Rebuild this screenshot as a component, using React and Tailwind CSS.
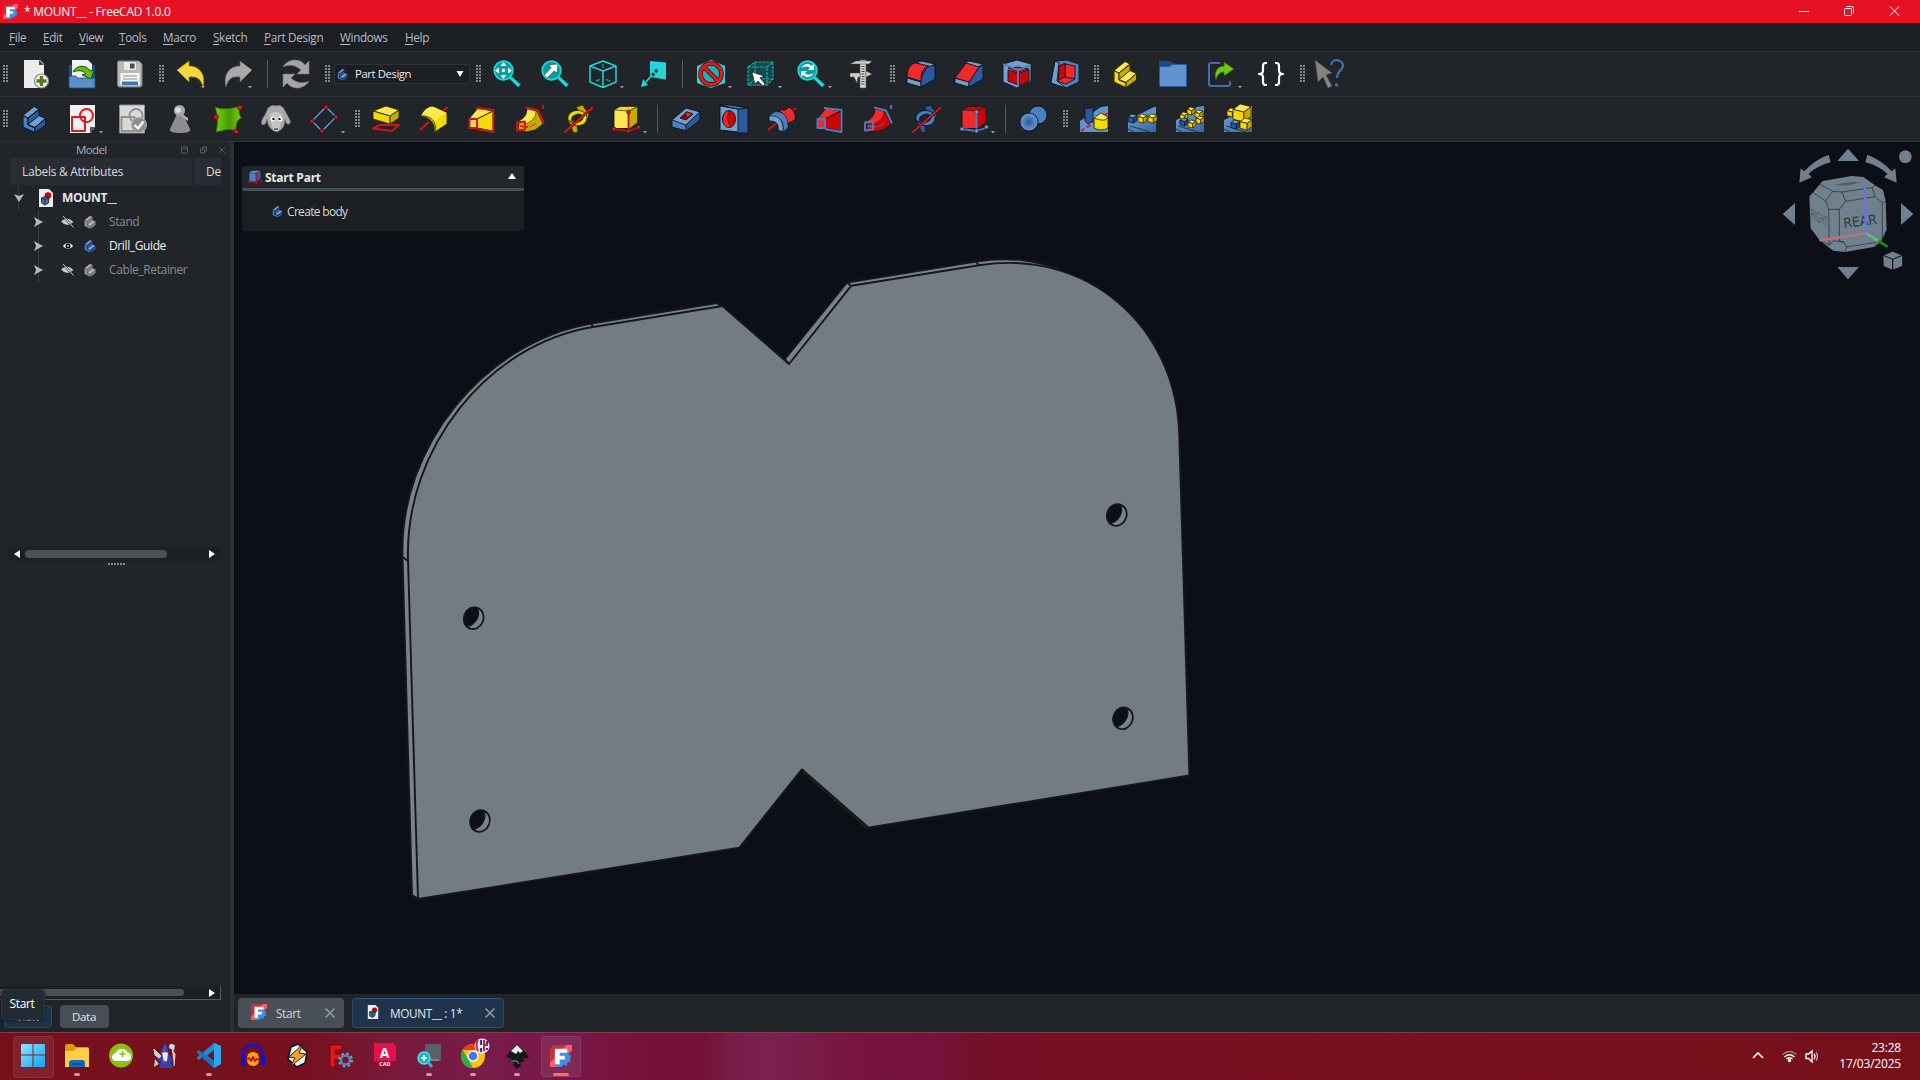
import React from "react";

const OUT = "#0b1521";
const B1 = "#729fcf", B2 = "#4a7fc0", B3 = "#2c5a9c";
const Y1 = "#fce94f", Y2 = "#f2d90c", Y3 = "#c9a900";
const R1 = "#f02a2a", R2 = "#cc0404";
const T1 = "#22d6da", T2 = "#0a9da0";
const OY = "#302b00";

function Svg({ children, className = "", drop, s = 28 }) {
  return (
    <svg viewBox="0 0 28 28" width={s} height={s} className={"shrink-0 overflow-visible " + className} strokeLinejoin="round">
      {children}
      {drop && <path d={drop === "in" ? "M24 26h4l-2 2.4z" : "M31 26h4l-2 2.4z"} fill="#9a9da0" />}
    </svg>
  );
}

function Stairs({ a = B1, b = B2, c = B3, o = OUT }) {
  return (
    <g stroke={o} strokeWidth="1">
      <path d="M3 10.500 8 13v7l7 3v4.500L3 22z" fill={b} />
      <path d="M3 10.500 14 1.500l5 2.500L8 13z" fill={a} />
      <path d="M8 13 19 4.500v7L8 20z" fill={c} />
      <path d="M8 19.500 19 10.500l6.500 3L15 22.500z" fill={a} />
      <path d="M15 22.500 25.500 13.500v6.500L15 27.500z" fill={c} />
    </g>
  );
}

function Cube({ x, y, s, a, b, c, o = OUT, w = 0.8 }) {
  return (
    <g transform={`translate(${x} ${y}) scale(${s})`} stroke={o} strokeWidth={w / s}>
      <path d="M0 .3.400 0 1 .15.600.45z" fill={a} />
      <path d="M0 .3.600.45V1L0 .85z" fill={b} />
      <path d="M.6.450 1 .15V.7L.6 1z" fill={c} />
    </g>
  );
}

function FLogo({ s, className = "" }) {
  return (
    <svg viewBox="0 0 16 16" width={s} height={s} className={"shrink-0 " + className}>
      <path d="M3 0h13v4L4 16H0V3z" fill="#ff5a5f" />
      <path d="M3 0h9L1 12H0V3z" fill="#c92f36" />
      <path d="M7 5h7l-.5 2 2 1-1 2 .5 2-2 .5-1 2.500-2-.8-1.500 1.800L6 16H4z" fill="#418fde" />
      <path d="M3.500 2.800h9v2.800h-5.500v2.200h3.800v2.700H7v3.500H3.500z" fill="#fff" />
    </svg>
  );
}

function DocIcon({ className = "" }) {
  return (
    <svg viewBox="0 0 14 18" width="14" height="18" className={"shrink-0 " + className}>
      <path d="M0 0h10l4 4v14H0z" fill="#eeeeec" />
      <circle cx="9" cy="6.500" r="3.300" fill="#d40000" />
      <path d="M2.500 9 6 7.500l4 1.500-.5 5L6 16l-3.500-2z" fill="#3f72b4" stroke="#101c30" strokeWidth=".8" />
      <path d="M2.500 9l3.500 1.500L10 9M6 10.500V16" stroke="#101c30" strokeWidth=".8" fill="none" />
    </svg>
  );
}

function Handle({ className }) {
  return (
    <svg width="5" height="18" viewBox="0 0 5 18" className={"shrink-0 " + className}>
      {[0, 3, 6, 9, 12, 15].map((y) => (
        <g key={y} fill="#84888b">
          <rect x="0" y={y} width="2" height="2" />
          <rect x="3" y={y} width="2" height="2" />
        </g>
      ))}
    </svg>
  );
}

const Sep = ({ className }) => <div className={"h-[28px] w-px shrink-0 bg-[#53585d] " + className} />;

const Glass = ({ children }) => (
  <g>
    <path d="M16 18.500l2.500-2.500 9.500 8.500-3 3z" fill={T1} stroke="#063c3e" strokeWidth=".7" />
    <circle cx="10.500" cy="10.500" r="9.300" fill={T2} stroke={T1} strokeWidth="1.700" />
    {children}
  </g>
);

function Loft({ f, g, e, d }) {
  return (
    <g stroke={d} strokeWidth=".9">
      <path d="M1 14 10 3l15 3-16 8z" fill={f} />
      <path d="M9 14 25 6v20L9 23z" fill={g} />
      <path d="M8 3l17.500 2v22L9 24" fill="none" stroke={e} strokeWidth="1.800" />
      <path d="M1.500 14H9v9H1.500z" fill={f} stroke={e} strokeWidth="2" />
    </g>
  );
}

function Pipe({ f, g, e }) {
  return (
    <g>
      <path d="M3 17C10 14 11 9 11 3l10 3 6 13-8 6-9 2-8-3z" fill={g} stroke={OUT} strokeWidth=".8" />
      <path d="M3 16C9 13 11 9 11 4l9 2c0 7-4 10-10 13z" fill={f} stroke={OUT} strokeWidth=".5" />
      <path d="M10 2.500l12 3 6 13M27.500 0l-1 4" fill="none" stroke={e} strokeWidth="2" />
      <path d="M1 17.500l8-1v8l-8 1z" fill="none" stroke={e} strokeWidth="1.900" />
      <path d="M4 21l8 1" stroke={e} strokeWidth="1.500" />
      <path d="M13 22c3-1 5-2 7-4" fill="none" stroke={e} strokeWidth="1.200" opacity=".6" />
    </g>
  );
}

function Helix({ f, g, o }) {
  return (
    <g>
      <path d="M12 2l7-2 2 4c5 3 5 8 1 11l-4 1c4-6 1-9-5-8-4 1-6 5-4 8l4 5 1 6-4 1C7 24 8 21 6 19 1 12 5 6 14 5z" fill={g} stroke={o} strokeWidth=".9" />
      <path d="M4 15C3 8 10 4 17 6c6 2 8 7 4 12-3 3-8 3-11 2l-3-3c6 1 11 0 12-4 0-4-4-5-8-3-3 1-4 3-4 7z" fill={f} stroke={o} strokeWidth=".9" />
      <path d="M1 27 28 3" stroke={o} strokeWidth="3" />
      <path d="M1 27 28 3" stroke="#d41414" strokeWidth="2" strokeLinecap="round" />
    </g>
  );
}

function Primitive({ f, g, h, p, l }) {
  return (
    <g>
      <path d="M2 5 8 1.500h17.500v15l-9 7H2z" fill={f} stroke={OUT} strokeWidth=".9" />
      <path d="M16.500 6 25.500 1.500v16l-9 7z" fill={g} stroke={OUT} strokeWidth=".6" />
      <path d="M2 5 8 1.500h17.500l-9 4.500z" fill={h} stroke={OUT} strokeWidth=".6" />
      <path d="M16.500 7v18M2 24l14 2 10-3" fill="none" stroke={l} strokeWidth="1.800" />
      {[[16.5, 7], [2, 24], [16.5, 26], [26.5, 22]].map(([x, y]) => (
        <circle key={x + "-" + y} cx={x} cy={y} r="2" fill={p} stroke={OUT} strokeWidth=".5" />
      ))}
    </g>
  );
}

const Wedge = () => <path d="M0 16 21 2l7-1v26H0z" fill="#5e93d0" />;
const WedgeBase = () => (
  <g>
    <path d="M0 15 8 12 28 8v19H0z" fill="url(#wb)" />
    <path d="M2 21l20 6M0 24l6 3" stroke="#17365f" strokeWidth="1" />
  </g>
);
const YC = (p) => <Cube {...p} a={Y1} b={Y2} c={Y3} o={OY} />;
const BC = (p) => <Cube {...p} a={B1} b={B3} c="#204a87" />;

function Toolbar1() {
  return (
    <div className="flex h-[45px] items-center border-b border-[#2e3237] bg-[#212429]">
      <Handle className="ml-[3px]" />
      <Svg className="ml-[14px]">
        <path d="M2 0h16l4 4v24H2z" fill="#ececea" />
        <path d="M17 0l5 5h-5z" fill="#444" />
        <circle cx="19.500" cy="21" r="7" fill="#f4f4f2" stroke="#858780" strokeWidth="1.200" />
        <path d="M19.500 16v10M14.500 21h10" stroke="#4e7d1a" strokeWidth="3.400" />
      </Svg>
      <Svg className="ml-[18px]">
        <path d="M1 5h26v22H1z" fill="#204a87" />
        <path d="M4 0h16l4 4v14H4z" fill="#f2f2f0" />
        <path d="M1 16h7l2 2h17v10H1z" fill="#5b8fcc" stroke="#1d4a80" strokeWidth=".8" />
        <path d="M5 12c4-8 14-7 17-1l4-1-3 9-9-4 4-1c-3-4-8-4-13-2z" fill="#5fbb16" stroke="#1f5200" strokeWidth="1" />
      </Svg>
      <Svg className="ml-[20px]">
        <path d="M1.500 2.500q0-1.500 1.500-1.500h20l3 3v21q0 2-2 2H3.500q-2 0-2-2z" fill="#b9bab5" stroke="#7b7d79" strokeWidth="1" />
        <path d="M8 2h12v8H8z" fill="#e8e8e6" />
        <path d="M14 3.500h4.500v5H14z" fill="#474b4c" />
        <path d="M4.500 13h19v12h-19z" fill="#f7f7f7" />
        <path d="M7 16h14M7 19h14" stroke="#8a8d8f" strokeWidth="1" />
        <path d="M6 21.500h16v3.500H6z" fill="#3a75bd" />
      </Svg>
      <Handle className="ml-[15px]" />
      <Svg className="ml-[13px]" drop="in">
        <path d="M0 10 12 1v5c11 0 17 9 14 21-2-8-6-11-14-10v5z" fill="#f3d83a" stroke="#a68a06" strokeWidth=".7" />
      </Svg>
      <Svg className="ml-[19px]" drop="in">
        <path d="M28 10 16 1v5C5 6-1 15 2 27c2-8 6-11 14-10v5z" fill="#a9a9a9" stroke="#666" strokeWidth=".7" />
      </Svg>
      <Sep className="ml-[15px]" />
      <Svg className="ml-[14px]">
        <g fill="#a4a4a4" stroke="#777" strokeWidth=".6">
          <path d="M1 7C6-2 18-2 23 5l4-4v13H15l4-4C14 5 7 4 1 7z" />
          <path d="M27 21C22 30 10 30 5 23l-4 4V14h12l-4 4c5 5 12 6 18 3z" />
        </g>
      </Svg>
      <Handle className="ml-[15px]" />
      <div className="ml-[4px] flex h-[20px] w-[136px] shrink-0 items-center rounded-[3px] border border-[#2e3237] bg-[#1b1e22]">
        <Svg s={13} className="ml-[1px]"><Stairs /></Svg>
        <span className="ml-[6px] mt-px whitespace-nowrap text-[11.300px] tracking-[-0.400px] text-[#e8eaec]">Part Design</span>
        <svg width="8" height="6" className="mr-[5px] ml-auto"><path d="M.5 0h7L4 6z" fill="#fff" /></svg>
      </div>
      <Handle className="ml-[6px]" />
      <Svg className="ml-[12px]">
        <Glass>
          <path d="M10.500 2l3 4h-6zM10.500 19l3-4h-6zM2 10.500l4-3v6zM19 10.500l-4-3v6z" fill="#fff" />
          <circle cx="10.500" cy="10.500" r="1.800" fill="#fff" />
        </Glass>
      </Svg>
      <Svg className="ml-[20px]">
        <Glass><path d="M3 15l7-7-2-3 9-1-1 9-3-2-7 7z" fill="#fff" stroke="#043" strokeWidth=".5" /></Glass>
      </Svg>
      <Svg className="ml-[20px]" drop="out">
        <path d="M1 6 14 1l13 5v16l-13 5.500L1 22zM1 6l13 5 13-5M14 11v16" fill="none" stroke={T1} strokeWidth="1.500" />
        <path d="M14 4v4M7 21l4-1.500M17 19.500l4 1.500" stroke={T2} strokeWidth="1.400" />
      </Svg>
      <Svg className="ml-[23px]">
        <path d="M10 1 26 2.500v17L10 17z" fill={T1} />
        <path d="M6 22 18 9" stroke="#0b3a3c" strokeWidth="3" strokeDasharray="3 1.500" />
        <path d="M6 22 11 16" stroke={T1} strokeWidth="1.500" />
        <path d="M1 27l2-8 5 6z" fill={T1} />
      </Svg>
      <Sep className="ml-[14px]" />
      <Svg className="ml-[14px]" drop="out">
        <path d="M14 0 28 6v17l-14 5L0 23V6z" fill={T1} />
        <circle cx="14" cy="14" r="10.500" fill="#12b5b8" stroke="#450000" strokeWidth="4.500" />
        <path d="M7 7l14 14" stroke="#450000" strokeWidth="4.500" />
        <circle cx="14" cy="14" r="10.500" fill="none" stroke="#dd1c1c" strokeWidth="3" />
        <path d="M6.500 6.500l15 15" stroke="#dd1c1c" strokeWidth="3" />
      </Svg>
      <Svg className="ml-[22px]" drop="out">
        <path d="M1 7 8 2h18v17l-6 7H1z" fill="#134a4d" />
        <path d="M1 7h19v18H1zM1 7l7-5h18l-6 5M26 2v17l-6 6M8 2v17H26M8 19l-7 6" fill="none" stroke="#2a9ea1" strokeWidth="1.200" strokeDasharray="3 1" />
        <path d="M5 12l12 4-4 2 5 6-2 2-5-5-3 3z" fill="#fff" stroke="#111" strokeWidth=".6" />
      </Svg>
      <Svg className="ml-[22px]" drop="out">
        <Glass><path d="M4 8c3-5 8-5 11-2l2-2v6h-6l2-2c-2-2-5-2-9 0zM17 13c-3 5-8 5-11 2l-2 2v-6h6l-2 2c2 2 5 2 9 0z" fill="#fff" /></Glass>
      </Svg>
      <Svg className="ml-[22px]">
        <path d="M13 0h6v28h-6z" fill="#d6d6d3" stroke="#555" strokeWidth=".6" />
        <path d="M3 4l6-3h16l-3 3H3zM3 13h10v4h-2l-1 6-3-6H3zM19 11l6 3-6 3z" fill="#cfcfcb" stroke="#444" strokeWidth=".5" />
        <path d="M16 6v20" stroke="#444" strokeWidth="3" strokeDasharray="1 1.500" />
      </Svg>
      <Handle className="ml-[15px]" />
      <Svg className="ml-[12px]">
        <g stroke={OUT} strokeWidth=".9">
          <path d="M0 18l14 4v5L0 23z" fill={B1} />
          <path d="M14 22 28 14V4c-6-1-14 4-14 14z" fill={B3} />
          <path d="M14 27 28 19V5L20 7l-6 11z" fill={B3} />
          <path d="M14 1l14 3-6 3L9 3z" fill={B1} />
          <path d="M0 17C0 9 4 3 9 3l13 3c-6 2-8 7-8 15z" fill={R1} />
        </g>
      </Svg>
      <Svg className="ml-[20px]">
        <g stroke={OUT} strokeWidth=".9">
          <path d="M0 18l14 4v5L0 23z" fill={B1} />
          <path d="M14 22 24 7l4-2v14l-14 8z" fill={B3} />
          <path d="M14 1l14 3-5 3-13-4z" fill={B1} />
          <path d="M0 18 11 3l13 4-10 15z" fill={R1} />
        </g>
      </Svg>
      <Svg className="ml-[20px]">
        <g stroke={OUT} strokeWidth=".9">
          <path d="M0 4 14 0l14 4v17l-14 7L0 22z" fill={B1} />
          <path d="M5 10l10 3v12L5 21zM16 13l10-3v11l-10 5z" fill={R2} />
          <path d="M5 8l10-1 11 2-11 3z" fill={R1} />
          <path d="M0 4l15 6 13-5M15 10v17" fill="none" stroke={B2} strokeWidth="1.800" />
        </g>
      </Svg>
      <Svg className="ml-[20px]">
        <g stroke={OUT} strokeWidth=".9">
          <path d="M4 1 16 0l12 4v18l-13 6L0 23z" fill={B2} />
          <path d="M4 1l4 2-2 18 9 7L0 23z" fill={B1} />
          <path d="M14 4 24 6v12l-10 2z" fill={R1} />
          <path d="M8 6l6-3v14l-7 4z" fill={R2} />
          <path d="M6 21l8-4 10 2-9 5z" fill={R1} />
        </g>
      </Svg>
      <Handle className="ml-[15px]" />
      <Svg className="ml-[12px]">
        <Stairs a={Y1} b={Y2} c={Y3} o={OY} />
      </Svg>
      <Svg className="ml-[20px]">
        <path d="M0 1h11l2 2h3v4H0z" fill="#204a87" />
        <path d="M.5 6.500H11l2-2h14.500v22H.5z" fill="#6093d0" stroke="#2a5b9c" strokeWidth="1" />
      </Svg>
      <Svg className="ml-[20px]" drop="out">
        <path d="M13 3H4Q2 3 2 5v19q0 2 2 2h17q2 0 2-2v-3" fill="none" stroke="#3e70b0" strokeWidth="2" />
        <path d="M9 20C6 12 11 6 17 6V2l10 7-10 7v-4c-4 0-7 3-8 8z" fill="#6fc71e" stroke="#2d6100" strokeWidth=".8" />
      </Svg>
      <Svg className="ml-[22px]">
        <path d="M10 3H8.500Q6 3 6 6v4.500Q6 14 2 14q4 0 4 3.500V22q0 3 2.500 3H10M18 3h1.500Q22 3 22 6v4.500q0 3.500 4 3.500-4 0-4 3.500V22q0 3-2.500 3H18" fill="none" stroke="#fff" strokeWidth="2.200" />
      </Svg>
      <Handle className="ml-[15px]" />
      <Svg className="ml-[12px]">
        <path d="M-2 0 15 13l-6 2 6 11-4 2-5-11-5 5z" fill="#858580" stroke="#4a4a48" strokeWidth=".7" />
        <path d="M14 5c1-7 12-6 12 1-1 5-6 5-6 12" fill="none" stroke="#3e70b0" strokeWidth="2.200" />
        <circle cx="19.500" cy="25" r="1.700" fill="#3e70b0" />
      </Svg>
    </div>
  );
}

function SketchShapes({ c }) {
  return (
    <g fill="none" stroke={c} strokeWidth="2">
      <circle cx="18.500" cy="10.500" r="6.500" />
      <path d="M4 12h13v14H4z" />
    </g>
  );
}

function Toolbar2() {
  return (
    <div className="flex h-[45px] items-center border-b border-[#2e3237] bg-[#212429]">
      <Handle className="ml-[3px]" />
      <Svg className="ml-[12px]"><Stairs /></Svg>
      <Svg className="ml-[20px]" drop="out">
        <path d="M2 0h25v22l-5 6H2z" fill="#f2f2f0" />
        <path d="M22 28v-6h5z" fill="#555" />
        <SketchShapes c="#e01818" />
      </Svg>
      <Svg className="ml-[23px]">
        <path d="M.5 0h25v28H.5z" fill="#d9d9d7" stroke="#8b8b8b" strokeWidth="1" />
        <g transform="translate(-1.500 0)"><SketchShapes c="#929292" /></g>
        <circle cx="20" cy="20" r="7.500" fill="#8e9090" stroke="#b3b3b3" strokeWidth="1" />
        <path d="M15.500 20l3.500 3.500 5.500-7" fill="none" stroke="#fff" strokeWidth="2.200" />
      </Svg>
      <Svg className="ml-[19px]">
        <path d="M11 9 3.500 25q1 3 10.500 3t10.500-3L17 9z" fill="#8d8d8d" />
        <path d="M16 9l6 4v3l-6-4z" fill="#b0b0b0" />
        <circle cx="13.500" cy="5.500" r="5.500" fill="#a9a9a9" />
        <circle cx="12" cy="5" r="2.800" fill="#dcdcdc" />
      </Svg>
      <Svg className="ml-[20px]">
        <path d="M1 2c8 3 16 2 25-1-2 6 0 10 1.500 12C22 15 22 21 22 27c-6-5-13-1-20 0 2-8 2-16-1-25z" fill="url(#gr)" stroke="#2f6a00" strokeWidth=".8" />
        {[[26, 2.5], [2, 12], [22, 26.5]].map(([x, y]) => <circle key={x} cx={x} cy={y} r="2.400" fill="#e01818" stroke="#500" strokeWidth=".7" />)}
      </Svg>
      <Svg className="ml-[20px]">
        <path d="M6 3q4-4 8-2 5-2 8 3 2 4 6 11 1 3-1 4-3 1-4-5 0 10-8 13-9-2-10-13-1 6-4 6-3-1 0-7 3-4 5-10z" fill="#aaa" stroke="#777" strokeWidth=".7" />
        <path d="M8 9q6-4 12 0-1 12-4 17h-4Q9 21 8 9z" fill="#c4c4c4" />
        <circle cx="11" cy="14" r="2.500" fill="#fff" /><circle cx="18" cy="14" r="2.500" fill="#fff" />
        <circle cx="11.500" cy="14" r="1.200" fill="#111" /><circle cx="17.500" cy="14" r="1.200" fill="#111" />
        <path d="M12 24h4" stroke="#555" strokeWidth="1.500" />
      </Svg>
      <Svg className="ml-[20px]" drop="out">
        <path d="M16 2 26 12 12 26 2 16z" fill="none" stroke="#0d1c30" strokeWidth="3" />
        <path d="M16 2 26 12 12 26 2 16z" fill="none" stroke="#5b8fd0" strokeWidth="1.700" />
        {[[16, 2], [26, 12], [12, 26], [2, 16]].map(([x, y]) => <circle key={x} cx={x} cy={y} r="2.100" fill="#e01818" stroke="#500" strokeWidth=".7" />)}
      </Svg>
      <Handle className="ml-[17px]" />
      <Svg className="ml-[12px]">
        <path d="M1 23.500 8 20h19l-7 6z" fill="none" stroke="#d41414" strokeWidth="2" />
        <g stroke={OY} strokeWidth=".9">
          <path d="M1 6 14 1l13 4-9 6z" fill={Y1} />
          <path d="M1 6l17 5v8L1 14z" fill={Y2} />
          <path d="M18 11l9-6v8l-9 6z" fill={Y3} />
        </g>
      </Svg>
      <Svg className="ml-[20px]">
        <path d="M0 25 9 17M20 8l8-6" stroke="#d41414" strokeWidth="2" />
        <path d="M1 11C5 3 10 1 14 2l13 6v11l-13 8.500c2-9-4-15-13-16.500z" fill={Y2} stroke={OY} strokeWidth=".9" />
        <path d="M1 11C5 3 10 1 14 2l13 6c-6 1-9 5-11 9-3-5-8-7-15-6z" fill={Y1} />
        <path d="M1 11c8-1 17 5 14 16.500" fill="none" stroke={OY} strokeWidth=".8" />
      </Svg>
      <Svg className="ml-[20px]"><Loft f={Y1} g={Y2} e="#d41414" d={OY} /></Svg>
      <Svg className="ml-[20px]"><Pipe f={Y1} g={Y3} e="#d41414" /></Svg>
      <Svg className="ml-[20px]"><Helix f={Y2} g={Y3} o={OY} /></Svg>
      <Svg className="ml-[20px]" drop="out"><Primitive f={Y1} g={Y3} h={Y2} p="#e01818" l="#c01010" /></Svg>
      <Sep className="ml-[17px]" />
      <Svg className="ml-[14px]">
        <g stroke={OUT} strokeWidth=".9">
          <path d="M0 15 14 3l14 4v8L15 26 0 22z" fill={B2} />
          <path d="M0 15 14 3l14 4-14 13z" fill={B1} />
          <path d="M14 20 28 7v8L14 26z" fill={B3} />
          <path d="M8 13l7-6 6 2-7 6z" fill="#a00000" />
          <path d="M13 8l2 5 6-4-6-2z" fill={R1} />
        </g>
      </Svg>
      <Svg className="ml-[20px]">
        <g stroke={OUT} strokeWidth=".9">
          <path d="M0 0 18 2l10 1v25H18L0 25z" fill={B3} />
          <path d="M0 1l18 3v23L0 25z" fill={B1} />
          <path d="M0 0h10l18 3-10 1z" fill={B2} />
          <ellipse cx="9" cy="14" rx="6.500" ry="8.500" fill={R2} />
          <path d="M9 6c-3 5-2 12 2 16-6 1-8-3-8-8 0-4 2-8 6-8z" fill={R1} strokeWidth=".4" />
        </g>
      </Svg>
      <Svg className="ml-[20px]">
        <path d="M0 25 28 3" stroke="#d41414" strokeWidth="2" />
        <path d="M12 4q5 3 9-2c5 3 7 8 6 13l-8 4q-1-9-7-12z" fill={R1} stroke={OUT} strokeWidth=".9" />
        <path d="M1 11C8 8 17 14 15 27l-5-2c1-6-2-9-9-9z" fill={B1} stroke={OUT} strokeWidth=".9" />
        <path d="M1 11 6 7c9-2 15 5 14 16l-5 4C17 15 10 10 1 11z" fill={B2} stroke={OUT} strokeWidth=".7" />
      </Svg>
      <Svg className="ml-[20px]"><Loft f={R1} g={R2} e={B2} d={OUT} /></Svg>
      <Svg className="ml-[20px]"><Pipe f={R1} g={R2} e={B2} /></Svg>
      <Svg className="ml-[20px]"><Helix f={B2} g={B3} o={OUT} /></Svg>
      <Svg className="ml-[20px]" drop="out"><Primitive f={R1} g={R2} h={R2} p={B1} l={B2} /></Svg>
      <Sep className="ml-[17px]" />
      <Svg className="ml-[14px]">
        <circle cx="18" cy="10" r="9" fill={B2} stroke={OUT} strokeWidth=".9" />
        <circle cx="9" cy="17" r="9" fill="url(#bl)" stroke={OUT} strokeWidth=".9" />
      </Svg>
      <Handle className="ml-[15px]" />
      <Svg className="ml-[12px]">
        <Wedge />
        <path d="M1 26 28 8" stroke="#d41414" strokeWidth="2" strokeDasharray="4 3" />
        <path d="M5 2l3 2 5-2v14l-5 3-3-3z" fill={B3} stroke={OUT} strokeWidth=".9" />
        <path d="M14 13v10q7 4 14 0V13z" fill={Y2} stroke={OY} strokeWidth=".9" />
        <path d="M14 13l7-5 7 4q-2 4-7 3t-7-2z" fill={Y1} stroke={OY} strokeWidth=".8" />
      </Svg>
      <Svg className="ml-[20px]">
        <path d="M0 15 26 2h2v8z" fill="#5e93d0" />
        <WedgeBase />
        <BC x={0} y={9} s={9} /><YC x={10} y={9} s={9} /><YC x={20} y={9} s={9} />
      </Svg>
      <Svg className="ml-[20px]">
        <Wedge /><WedgeBase />
        <YC x={11} y={2} s={8} /><YC x={19} y={5} s={8} /><YC x={4} y={7} s={8} /><YC x={20} y={11} s={8} /><BC x={4} y={13} s={8} /><YC x={12} y={15} s={8} />
      </Svg>
      <Svg className="ml-[20px]">
        <Wedge /><WedgeBase />
        <YC x={3} y={3} s={9} /><YC x={9} y={-1} s={18} /><BC x={7} y={15} s={9} /><YC x={16} y={13} s={12} />
      </Svg>
    </div>
  );
}

function TitleBar() {
  return (
    <div className="flex h-[23px] items-center bg-[#e81123] text-white">
      <FLogo s={15} className="ml-[3px]" />
      <span className="ml-[6px] whitespace-pre text-[12px] tracking-[-0.270px]">* MOUNT__ - FreeCAD 1.0.0</span>
      <svg width="104" height="12" viewBox="0 0 104 12" className="mr-[18px] mb-[2px] ml-auto" fill="none" stroke="#fff">
        <path d="M1 6.500h10" />
        <rect x="46.500" y="3.500" width="7" height="7" rx="1" />
        <path d="M48.500 1.500h5q2 0 2 2v5" />
        <path d="M92 1.500l9 9M101 1.500l-9 9" />
      </svg>
    </div>
  );
}

const MENUS = [
  ["File", "w-[34px]"], ["Edit", "w-[36px]"], ["View", "w-[40px]"], ["Tools", "w-[44px]"], ["Macro", "w-[50px]"],
  ["Sketch", "w-[51px]"], ["Part Design", "w-[76px]"], ["Windows", "w-[65px]"], ["Help", "w-[40px]"],
];

function MenuBar() {
  return (
    <div className="flex h-[29px] items-center border-b border-[#2e3237] bg-[#1b1e22] pl-[9px] pt-px text-[11.700px] tracking-[-0.300px] text-[#b6bdc4]">
      {MENUS.map(([m, w]) => (
        <span key={m} className={"shrink-0 whitespace-nowrap " + w}>
          <span className="underline underline-offset-2">{m[0]}</span>{m.slice(1)}
        </span>
      ))}
    </div>
  );
}

const Eye = () => (
  <svg width="12" height="8" viewBox="0 0 12 8" className="shrink-0">
    <path d="M.5 4Q6-2.500 11.500 4 6 10.500.500 4z" fill="#fff" stroke="#000" strokeWidth=".5" />
    <circle cx="6" cy="4" r="2.500" fill="#000" /><circle cx="6" cy="4" r=".9" fill="#fff" />
  </svg>
);
const EyeOff = () => (
  <svg width="13" height="12" viewBox="0 0 13 12" className="shrink-0">
    <path d="M.5 5Q6-.500 12.500 6 6 12 .5 6z" fill="#c9c9c9" />
    <path d="M1 0l11 12M3 0l9 10" stroke="#222" strokeWidth=".9" />
    <path d="M2 0l10.500 11.500" stroke="#ddd" strokeWidth=".9" />
  </svg>
);

function TreeRow({ name, on }) {
  return (
    <div className="flex h-[24px] items-center">
      <div className="ml-[38px] flex h-full w-px shrink-0 items-center bg-[#383c41]">
        <svg width="12" height="12" viewBox="0 0 12 12" className="-ml-[4px] shrink-0">
          <path d="M8 6h4" stroke="#383c41" />
          <path d="M0 1l9 5-9 5 2-5z" fill="#b4b8bc" />
        </svg>
      </div>
      <div className="ml-[22px] flex w-[13px] shrink-0 justify-center">{on ? <Eye /> : <EyeOff />}</div>
      <Svg s={14} className="-mt-[1px] ml-[9px]">
        {on ? <Stairs a="#6ca0dc" b="#4a80c4" c="#2c5a9c" o="#16283f" /> : <Stairs a="#b4b4b4" b="#9c9c9c" c="#858585" o="#555" />}
      </Svg>
      <span className={"ml-[12px] whitespace-nowrap text-[12px] tracking-[-0.380px] " + (on ? "text-[#f0f2f4]" : "text-[#868b90]")}>{name}</span>
    </div>
  );
}

function LeftPanel() {
  return (
    <div className="flex h-full w-[234px] shrink-0 flex-col border-r-[4px] border-[#2c3035] bg-[#212429]">
      <div className="flex h-[16px] items-center">
        <span className="ml-[76px] text-[11.500px] tracking-[-0.600px] text-[#a9b0b6]">Model</span>
        <svg width="46" height="8" viewBox="0 0 46 8" className="ml-auto mr-[4px]" fill="none" stroke="#565b60">
          <path d="M1.500 1h6v6h-6zM1.500 3h6M20.500 3h4v4h-4zM22.500 3V1h4v4h-2M39 1l6 6M45 1l-6 6" />
        </svg>
      </div>
      <div className="ml-[10px] mr-[9px] flex h-[27px] text-[12px] tracking-[-0.270px] text-[#d5d9dd]">
        <div className="flex w-[182px] shrink-0 items-center bg-[#292d33] pl-[12px]">Labels &amp; Attributes</div>
        <div className="ml-[2px] flex flex-1 items-center bg-[#292d33] pl-[12px]">De</div>
      </div>
      <div className="mt-px flex h-[24px] items-center">
        <div className="ml-[18px] flex h-full w-px shrink-0 items-center bg-[#383c41]">
          <svg width="10" height="10" viewBox="0 0 10 10" className="-ml-[4px] shrink-0"><path d="M0 1l5 2 5-2-5 8z" fill="#b4b8bc" /></svg>
        </div>
        <DocIcon className="-mt-px ml-[20px]" />
        <span className="ml-[9px] text-[12px] font-bold tracking-[-0.300px] text-[#e4e7ea]">MOUNT__</span>
      </div>
      <TreeRow name="Stand" />
      <TreeRow name="Drill_Guide" on />
      <TreeRow name="Cable_Retainer" />
      <div className="ml-[9px] mt-auto flex h-[14px] w-[212px] shrink-0 items-center rounded-[2px] bg-[#1c1f23]">
        <svg width="6" height="8" className="ml-[5px]"><path d="M6 0v8L0 4z" fill="#fff" /></svg>
        <div className="ml-[5px] h-[8px] w-[142px] rounded-[4px] bg-[#4a5058]" />
        <svg width="6" height="8" className="mr-[6px] ml-auto"><path d="M0 0v8l6-4z" fill="#fff" /></svg>
      </div>
      <div className="ml-[108px] mt-[2px] flex h-[2px] shrink-0 gap-px">
        {[0, 1, 2, 3, 4, 5].map((i) => <div key={i} className="size-[2px] bg-[#85898c]" />)}
      </div>
      <div className="relative mt-[15px] flex h-[452px] shrink-0 flex-col justify-end">
        <div className="flex h-[14px] w-[221px] items-center border-b border-r border-[#565c62] bg-[#1c1f23]">
          <div className="h-[7px] w-[184px] rounded-r-[4px] bg-[#4a5058]" />
          <svg width="6" height="8" className="mr-[5px] ml-auto"><path d="M0 0v8l6-4z" fill="#fff" /></svg>
        </div>
        <div className="mb-[4px] mt-[5px] flex h-[23px] gap-[8px] pl-[4px] text-[11.500px] tracking-[-0.300px]">
          <div className="flex w-[48px] items-center justify-center rounded-[4px] border border-[#24486a] bg-[#1f344b] text-[#e0e4e8]">View</div>
          <div className="flex w-[49px] items-center justify-center rounded-[4px] bg-[#474e56] pr-px text-[#e0e4e8]">Data</div>
        </div>
        <div className="absolute bottom-[12px] left-px flex h-[31px] w-[44px] items-center justify-center rounded-[4px] border border-[#2c343c] bg-[#222b33] pb-px pr-[2px] text-[12px] tracking-[-0.300px] text-white shadow-[0_1px_3px_#0008]">
          Start
        </div>
      </div>
    </div>
  );
}

function Hole({ x, y }) {
  return (
    <g transform={`translate(${x} ${y})`}>
      <ellipse rx="9.700" ry="11" transform="rotate(22)" fill="#7a828a" stroke="#15181a" strokeWidth="1.800" />
      <path d="M3.800-9.700C7-3 2 6-5.800 8.200-13 4-10-10 0-10.700z" fill="#0c0f17" stroke="#15181a" strokeWidth="1.300" />
    </g>
  );
}

function Model3D() {
  return (
    <svg width="1686" height="852" viewBox="234 142 1686 852" className="block" strokeLinejoin="round">
      <defs>
        <linearGradient id="gr"><stop offset="0" stopColor="#73d216" /><stop offset=".55" stopColor="#4c9a06" /><stop offset="1" stopColor="#73d216" /></linearGradient>
        <radialGradient id="bl"><stop offset="0" stopColor="#2c5a9c" /><stop offset="1" stopColor="#6a9ad4" /></radialGradient>
        <linearGradient id="wb" x2="1" y2="1"><stop offset="0" stopColor="#729fcf" /><stop offset="1" stopColor="#3465a4" /></linearGradient>
      </defs>
      <path d="M412 895 402.500 557C399 446 485 342 591.400 323.500L717 303 785 359 847 282.500 976 261.500C1012 256 1036 261 1060 269L1060 600 500 700 418 898.700z" fill="#7a828a" stroke="#15181a" strokeWidth="1.900" />
      <path d="M418 899 408 560C404.700 448.400 487.500 344.100 593 327L722.600 306 789 364 851.300 285.700 979 265.300C1085 248.100 1175.900 324 1179.200 434L1189.400 775.500 868.300 827.600 801.700 769.500 739.300 847.800z" fill="#737b83" stroke="#15181a" strokeWidth="1.900" />
      <path d="M402.500 557l5.500 4M591.400 323.500l2 4M785 359l4 5M847 282.500l4.300 3.500M976 261.500l3 4" stroke="#15181a" strokeWidth="1.900" />
      <path d="M801.700 770 868 828" stroke="#1b1c1a" strokeWidth="3" />
      <Hole x={473.7} y={618.2} />
      <Hole x={480} y={821} />
      <Hole x={1116.8} y={515} />
      <Hole x={1123} y={718.3} />
      <NavCube />
    </svg>
  );
}

function NavCube() {
  return (
    <g transform="translate(1700 0) scale(.33333)" fill="#71808e">
      <path d="M444 446l33 37h-65zM444 838l33-37h-65zM248 642l37-33v66zM640 642l-37-33v66z" />
      <circle cx="616" cy="470" r="19" />
      <path d="M386 465l6 22c-25 6-48 18-66 34l9 11-37 16 4-43 11 9c20-22 46-40 73-49z" />
      <path d="M502 465l-6 22c25 6 48 18 66 34l-9 11 37 16-4-43-11 9c-20-22-46-40-73-49z" />
      <path d="M328 590 368 543 455 528 490 531 525 556 549 570 557 603 560 690 545 723 525 740 435 756 400 752 360 722 332 685z" />
      <g fill="none" stroke="#22282d" strokeWidth="2">
        <path d="M338 577 377 603 398 574 426 576 437 604 418 628 386 628 377 603M398 574 360 553M386 628 388 735M418 628V723M388 735 400 722 431 726 440 741 435 755M418 723 431 726M426 576 516 563M437 604 525 590 516 563 525 556M525 590 547 608 558 604M547 608V717L560 690M547 717 522 740M440 741 530 727" />
        <path d="M360 722l28 13" />
      </g>
      <path d="M405 555q40-12 78-8-40 13-78 8z" fill="#505c67" />
      <text x="432" y="684" fontSize="41" fill="#2f3940" transform="rotate(-7 432 684)" textLength="101" lengthAdjust="spacingAndGlyphs" fontFamily="DejaVu Sans, sans-serif">REAR</text>
      <text x="0" y="0" fontSize="40" fill="#4a5660" transform="matrix(.5 .27 0 1 332 654)" textLength="102" lengthAdjust="spacingAndGlyphs" fontFamily="DejaVu Sans, sans-serif">RIGHT</text>
      <path d="M494 555 498 700" stroke="#6e73dc" strokeWidth="7" />
      <path d="M358 721 498 700" stroke="#c2707c" strokeWidth="7" />
      <path d="M498 700 536 723" stroke="#5cc67c" strokeWidth="7" />
      <path d="M534 722 563 740" stroke="#08a008" strokeWidth="7" />
      <g stroke="#0c0f17" strokeWidth="2.500">
        <path d="M549 766 578 754 608 766 578 778z" />
        <path d="M549 766 578 778V811L550 799zM578 778 608 766V798L578 811z" />
      </g>
    </g>
  );
}

function TaskPanel() {
  return (
    <div className="absolute left-[8px] top-[24px] h-[65px] w-[282px] overflow-hidden rounded-[3px] bg-[#1b1e22]">
      <div className="flex h-[25px] items-center rounded-b-[2px] border-b-[3px] border-[#454c54] bg-[#22252a]">
        <Svg s={14} className="ml-[6px]"><Primitive f={B2} g={B3} h={B1} p="#e01818" l="#c01010" /></Svg>
        <span className="ml-[3px] mt-[2px] text-[12px] font-bold tracking-[-0.250px] text-[#e8eaec]">Start Part</span>
        <svg width="8" height="6" className="mr-[8px] mb-[2px] ml-auto"><path d="M0 6h8L4 0z" fill="#fff" /></svg>
      </div>
      <div className="mt-[13px] flex h-[16px] items-center">
        <Svg s={13} className="-mt-[2px] ml-[29px]"><Stairs /></Svg>
        <span className="ml-[3px] text-[12px] tracking-[-0.680px] text-[#d5d9dd]">Create body</span>
      </div>
    </div>
  );
}

const TabX = ({ className }) => (
  <svg width="10" height="10" viewBox="0 0 10 10" className={"shrink-0 " + className}><path d="M.5.500l9 9M9.500.500l-9 9" stroke="#949ba2" strokeWidth="1.500" /></svg>
);

function DocTabs() {
  return (
    <div className="flex h-[38px] gap-[8px] bg-[#212429] pl-[4px] pt-[4px] text-[11.800px] tracking-[-0.350px]">
      <div className="flex h-[30px] w-[106px] items-center rounded-[4px] bg-[#484f57] text-[#d2d6da]">
        <FLogo s={16} className="ml-[13px] mb-[3px]" />
        <span className="ml-[9px] mt-[2px]">Start</span>
        <TabX className="mr-[9px] ml-auto" />
      </div>
      <div className="flex h-[30px] w-[152px] items-center rounded-[4px] border border-[#29506f] bg-[#1f344b] text-[#e4e8ec]">
        <DocIcon className="mb-[3px] ml-[13px] scale-[.78]" />
        <span className="ml-[10px] mt-[2px] whitespace-nowrap">MOUNT__ : 1*</span>
        <TabX className="mr-[8px] ml-auto" />
      </div>
    </div>
  );
}

const TASKS = [
  {
    active: true,
    icon: <g><path d="M3 2h10.500v10.500H2V3zM14.500 2H25q1 0 1 1v9.500H14.500zM2 13.500h11.500V25H3q-1 0-1-1zM14.500 13.500H26V24q0 1-1 1H14.500z" fill="url(#win)" /></g>,
  },
  {
    run: true,
    icon: <g><path d="M2 4q0-2 2-2h6l3 3h11q2 0 2 2v3H2z" fill="#e09a12" /><path d="M2 9h9l3-3h10q2 0 2 2v17H2z" fill="#ffcf48" /><path d="M6 25v-4q0-3 3-3h10q3 0 3 3v4z" fill="#0f6cbd" /><path d="M9 22h10" stroke="#0a4a86" strokeWidth="2" /></g>,
  },
  {
    icon: <g><circle cx="14" cy="13.500" r="12" fill="#8cc010" /><path d="M8 19q-3-1-3-4t4-4q1-4 6-4 4 0 5 3 4 1 4 5 0 4-4 4z" fill="#fff" /><path d="M15.500 9v6M12.500 12h6" stroke="#8cc010" strokeWidth="1.500" /></g>,
  },
  {
    icon: <g><path d="M14 1l4 10-9 1z" fill="#3b4fc4" /><path d="M9 14l9-2 3 5-1 4 2 5H8l2-6-4-3z" fill="#2e44b8" /><path d="M3 7l5 5 2 2-2 2-4-3zM21 8l3 4-1 12" fill="#ccc" stroke="#ddd" /><path d="M11 11l3-1 3 1-1 8-3 1z" fill="#eee" /><path d="M4 17l4 5-5 3M19 2l5 1-1 6-3-2z" fill="#b9c3d8" /><circle cx="20.500" cy="4.500" r="2.500" fill="#d4dcea" /><path d="M13 18l2 2-2 2z" fill="#e03030" /></g>,
  },
  {
    run: true,
    icon: <g><path d="M19 1l7 3v18l-7 4L7 15l-3 3-2-1.500v-1L19 1z" fill="#1f8ad2" /><path d="M19 1l7 3v18l-7 4z" fill="#2aa7ee" /><path d="M2 9.500 4 8l15 12v6L2 11z" fill="#1577bd" /><path d="M19 8v11l-7-5.500z" fill="#76122a" /></g>,
  },
  {
    icon: <g><path d="M4 16V12Q5 3 14 3t10 9v4" fill="none" stroke="#1414d8" strokeWidth="2.600" /><rect x="2" y="13" width="4.500" height="11" rx="2" fill="#1010c8" /><rect x="21.500" y="13" width="4.500" height="11" rx="2" fill="#1010c8" /><path d="M8 17q0-7 6-7t6 7q0 7-6 7t-6-7z" fill="#f4a321" /><path d="M7 18l3-2 2 3 2-4 2 4 2-2 3 1" stroke="#d41414" strokeWidth="2" fill="none" /></g>,
  },
  {
    icon: <g><path d="M8 5 15 2l9 8-2 11-8 4-9-8z" fill="#f4f4f4" stroke="#111" strokeWidth="1.500" /><path d="M20 2 6 15l6 1-5 9L23 12l-7-1z" fill="#f7a022" stroke="#222" strokeWidth="1" /></g>,
  },
  {
    icon: <g><path d="M3 3h12v5H8v4h6v5H8v8H3z" fill="#e01a1a" stroke="#800" strokeWidth="1" /><circle cx="18.500" cy="18" r="4.500" fill="none" stroke="#5f84b8" strokeWidth="2.500" /><circle cx="18.500" cy="18" r="6.500" fill="none" stroke="#6f9fd8" strokeWidth="2" strokeDasharray="2.500 2.600" /></g>,
  },
  {
    icon: <g><path d="M3 1h19l3 3v21H3z" fill="#e51050" /><path d="M3 19h22v6H3z" fill="#8f0a38" /><text x="13.500" y="15.500" fontSize="14" fontWeight="700" textAnchor="middle" fill="#fff" fontFamily="Open Sans, sans-serif">A</text><text x="14" y="24" fontSize="5.500" fontWeight="700" textAnchor="middle" fill="#fff" fontFamily="Open Sans, sans-serif">CAD</text></g>,
  },
  {
    run: true,
    icon: <g><path d="M10 2h16v17H10z" fill="#58616a" /><path d="M8 17h16v2H8z" fill="#79828a" /><circle cx="9" cy="16" r="6" fill="#12b8c4" stroke="#5fdce4" strokeWidth="1.500" /><path d="M13 20l4 5" stroke="#38a8e0" strokeWidth="3" /><path d="M9 13v6M6 16h6" stroke="#fff" strokeWidth="1.600" /></g>,
  },
  {
    run: true,
    icon: <g><circle cx="14" cy="14" r="12" fill="#fbc116" /><path d="M3.600 8A12 12 0 0 1 24.400 8H14z" fill="#e33b2e" /><path d="M3.600 8 9 17l5 9A12 12 0 0 1 3.600 8z" fill="#2da94f" /><circle cx="14" cy="14" r="5.500" fill="#fff" /><circle cx="14" cy="14" r="4.300" fill="#3a7af0" /><circle cx="23" cy="4" r="7.500" fill="#eef" /><path d="M19-2q-3 5 0 11M25-2v11M25 3h4" stroke="#c8203c" strokeWidth="2" fill="none" /><path d="M22-2v5M22 6v4M28-1v3M28 6v2" stroke="#203c98" strokeWidth="2.200" /></g>,
  },
  {
    run: true,
    icon: <g><path d="M14 2 25 13q2 3-2 3l-4 1 3 2-5 2 1 3-4 3-4-4 1-2-5-2 3-2-4-1q-3-1-1-3z" fill="#15171a" /><path d="M14 3l6 6-3 2-2-2-2 3-5-3z" fill="#e8eaee" /><path d="M8 19h6l2 3" stroke="#8a98a8" strokeWidth="1" fill="none" /></g>,
  },
];

function Taskbar() {
  return (
    <div className="flex h-[48px] items-center border-t border-[#7d3d4b] bg-[linear-gradient(90deg,#75101b_0px,#76101f_300px,#771a3c_400px,#781c48_480px,#781748_570px,#761036_650px,#751036_700px,#781c48_730px,#792150_770px,#781c48_810px,#781440_850px,#771240_930px,#741028_980px,#760f22_1100px,#78101d_1400px,#75101b_1920px)] pl-[11px]">
      <svg width="0" height="0" className="absolute"><defs><linearGradient id="win" x2="1" y2="1"><stop offset="0" stopColor="#8ee6ff" /><stop offset="1" stopColor="#139ff2" /></linearGradient></defs></svg>
      {TASKS.map((t, i) => (
        <div key={i} className="flex h-full w-[44px] shrink-0 items-center justify-center">
          <div className={"relative flex h-[42px] w-[41px] items-center justify-center rounded-[4px] " + (t.active ? "border border-[#ffffff10] bg-[#ffffff14]" : "")}>
            <Svg className="mb-px">{t.icon}</Svg>
            {t.run && <div className="absolute bottom-[2px] h-[3px] w-[6px] rounded-full bg-[#c99aa8]" />}
          </div>
        </div>
      ))}
      <div className="relative ml-[2px] flex h-[41px] w-[40px] items-center justify-center rounded-[4px] border border-[#ffffff14] bg-[#ffffff14]">
        <FLogo s={22} className="mb-px" />
        <div className="absolute bottom-0 h-[3px] w-[16px] rounded-full bg-[#ff6b62]" />
      </div>
      <svg width="66" height="16" viewBox="0 0 66 16" className="mb-px ml-auto" fill="none" stroke="#fff" strokeWidth="1.300">
        <path d="M1 10l5-5 5 5" strokeWidth="1.600" />
        <path d="M30.500 6.500q7-6 14 0" opacity=".45" /><path d="M32.500 9q5-4.500 10 0M34.500 11q3-2.500 6 0" /><circle cx="37.500" cy="12.500" r="1" fill="#fff" />
        <path d="M54 6h2.500L60 3v11l-3.500-3.500H54zM62 6q2 2.500 0 5" /><path d="M64 4.500q3 4 0 8" opacity=".6" />
      </svg>
      <div className="mb-[2px] ml-[13px] mr-[19px] w-[70px] shrink-0 whitespace-nowrap text-right text-[12px] leading-[16px] tracking-[-0.200px] text-white">
        <div>23:28</div>
        <div>17/03/2025</div>
      </div>
    </div>
  );
}

export default function App() {
  return (
    <div className="flex h-[1080px] w-[1920px] flex-col overflow-hidden bg-[#212429] font-['Open_Sans','Noto_Sans',sans-serif]">
      <TitleBar />
      <MenuBar />
      <Toolbar1 />
      <Toolbar2 />
      <div className="flex h-[890px] shrink-0">
        <LeftPanel />
        <div className="flex w-[1686px] shrink-0 flex-col">
          <div className="relative h-[852px] bg-[#0c0f17]">
            <Model3D />
            <TaskPanel />
          </div>
          <DocTabs />
        </div>
      </div>
      <Taskbar />
    </div>
  );
}
